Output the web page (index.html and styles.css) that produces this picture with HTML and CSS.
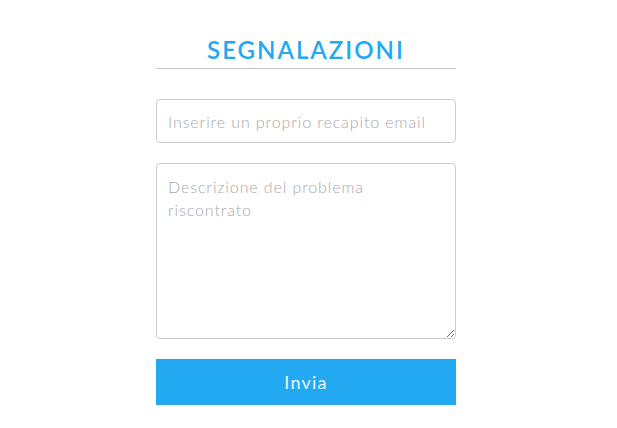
FILE: index.html
```html
<!DOCTYPE html>
<html lang="it">
<head>
<meta charset="utf-8">
<title>Segnalazioni</title>
<link rel="stylesheet" href="styles.css">
</head>
<body>
<main class="page">
  <form class="report">
    <h1 class="report-title">SEGNALAZIONI</h1>
    <input class="field field-email" type="email" placeholder="Inserire un proprio recapito email">
    <textarea class="field field-text" placeholder="Descrizione del problema riscontrato"></textarea>
    <button class="submit" type="button">Invia</button>
  </form>
</main>
</body>
</html>
```
FILE: styles.css
```css
html, body {
  margin: 0;
  padding: 0;
  background: #fff;
}
body {
  font-family: "Lato", "Open Sans", sans-serif;
  padding-right: 5px;
}
.page {
  width: 300px;
  margin: 0 auto;
  padding-top: 35px;
}
.report {
  display: flex;
  flex-direction: column;
}
.report-title {
  margin: 0;
  height: 33px;
  border-bottom: 1px solid #c4c4c4;
  text-align: center;
  color: #23a8f2;
  font-family: "Lato", sans-serif;
  font-weight: 600;
  font-size: 24px;
  letter-spacing: 2px;
  line-height: 30px;
}
.field {
  box-sizing: border-box;
  width: 300px;
  border: 1px solid #cccccc;
  border-radius: 4px;
  font-family: "Lato", sans-serif;
  font-size: 16px;
  font-weight: 300;
  letter-spacing: 0.9px;
  color: #555;
  padding: 0 11px;
  outline: none;
}
.field::placeholder {
  color: #a9a9a9;
}
.field-email {
  margin-top: 30px;
  height: 44px;
}
.field-text {
  margin-top: 20px;
  height: 176px;
  padding-top: 11px;
  line-height: 23px;
  resize: vertical;
}
.submit {
  margin-top: 20px;
  height: 46px;
  border: none;
  background: #23a8f2;
  color: #eaf6ff;
  font-family: "Lato", sans-serif;
  font-size: 18px;
  font-weight: 400;
  letter-spacing: 1.2px;
}
```
